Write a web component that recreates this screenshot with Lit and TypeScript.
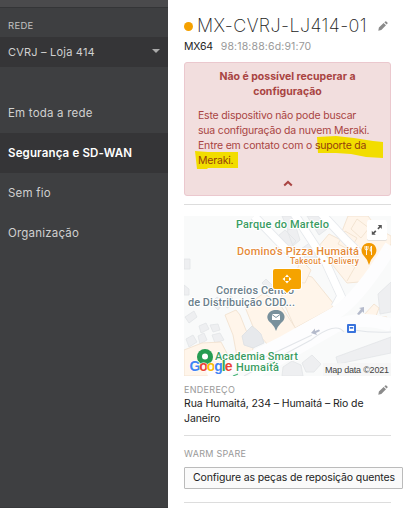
import { LitElement, html, css } from "lit";
import { customElement } from "lit/decorators.js";

const pencil = html`<svg class="pencil" width="10" height="10" viewBox="0 0 10 10"><path d="M0.3 9.7 0.9 6.6 5.6 1.9 8 4.3 3.3 9Z M6.3 1.3 7.3.4Q7.8 0 8.3.5L9.4 1.6Q9.9 2.1 9.4 2.7L8.6 3.6Z" fill="#8b8b8b"/></svg>`;

@customElement("side-nav")
class SideNav extends LitElement {
  static styles = css`
    :host { display: flex; flex-direction: column; width: 168px; flex: none; box-sizing: border-box;
      background: #3e3f41; color: #d0d0d0; font-size: 12px; border-bottom: 1px solid #38393b; }
    .top { height: 7px; background: #4a4a4c; border-bottom: 1px solid #343537; }
    .label { height: 29px; box-sizing: border-box; padding: 10px 8px 0; font-size: 9.5px; line-height: 16px; letter-spacing: .3px; color: #c2c2c2; }
    .network { height: 30px; background: #353537; padding: 0 8px; display: flex; align-items: center; justify-content: space-between; font-size: 11px; letter-spacing: .2px; }
    .network svg { margin: -3px 0 0; }
    nav { margin-top: 26px; display: flex; flex-direction: column; letter-spacing: .2px; }
    .item { height: 40px; line-height: 41px; padding-left: 8px; font-size: 11.5px; }
    .active { background: #353537; color: #fff; font-weight: 600; letter-spacing: .15px; }
  `;
  render() {
    return html`<div class="top"></div><div class="label">REDE</div>
      <div class="network"><span>CVRJ – Loja 414</span><svg width="8" height="4"><path d="M0 0H8L4 4Z" fill="#aaa"/></svg></div>
      <nav>${["Em toda a rede", "Segurança e SD-WAN", "Sem fio", "Organização"].map((t, i) => html`<div class="item ${i === 1 ? "active" : ""}">${t}</div>`)}</nav>`;
  }
}

@customElement("location-map")
class LocationMap extends LitElement {
  static styles = css`
    :host { display: block; height: 160px; }
    svg { display: block; }
    text { font-family: Roboto, sans-serif; font-size: 11px; font-weight: 500; paint-order: stroke; stroke: #fff; stroke-width: 2px; stroke-linejoin: round; }
    .green { fill: #3a9c62; }
    .orange { fill: #e58a38; }
    .slate { fill: #6b7f8c; }
    .small { font-size: 8.5px; }
    .logo { font-size: 14px; font-family: "Liberation Sans", sans-serif; font-weight: 700; stroke-width: 1px; }
    .credit { fill: #444; font: 9px "Liberation Sans", sans-serif; stroke: none; }
  `;
  render() {
    return html`<svg width="207" height="160" viewBox="0 0 207 160">
      <rect width="207" height="160" fill="#f9fafa"/>
      <g fill="#eeeff1" stroke="#e2e4e7" stroke-width=".8">
        <path d="M94 20 101 14 112 25 104 34ZM103 14 112 11 116 24 109 30ZM117 33 127 26 134 44 124 49ZM0 43H6V53H0ZM0 69 5 73V79H0ZM78 67 82 63 89 70 84 74Z"/>
        <path d="M98 0H112L117 10 104 14ZM123 0H135L143 13 135 19ZM194 78 207 66V96L196 98ZM152 141 207 121V137L154 148ZM118 147 128 139 137 148 130 156H122ZM99 151 108 145 117 149 119 160H98Z"/>
        <path d="M1 101 10 95 13 101 5 107ZM15 110 22 107 25 113 17 117ZM27 87 33 81 40 86 34 94ZM39 85 47 80 51 87 43 92ZM26 109 34 108 36 114 29 116ZM2 123 9 119 13 126 5 131ZM14 120 20 117 23 124 16 128ZM28 119 36 117 40 124 31 127Z"/>
      </g>
      <g fill="#fff5ea" stroke="#f2e2d0" stroke-width=".9">
        <path d="M97 81 112 57 128 61 149 87 148 92 111 112Z"/>
        <path d="M61 91 80 77 97 90 112 113 84 129 70 113Z"/>
        <path d="M117 44 127 54 121 67 108 66Z"/>
        <path d="M134 31 145 18 155 23 164 0H184L193 12 207 20V28L189 55 175 66 163 67 147 47Z"/>
        <path d="M41 99 52 94 56 99 69 132 67 145 54 146 49 119Z"/>
        <path d="M0 134 18 127 37 126 45 141 54 150 24 160H0Z"/>
        <path d="M179 100 190 88 195 92 192 100 203 101 199 108 188 107Z"/>
      </g>
      <path d="M58 120 68 110 73 114 77 118 80 127 69 132 60 129Z" fill="#e7e9ec" stroke="#dcdfe3" stroke-width=".8"/>
      <path d="M161 15 173 22 166 34 154 28ZM173 3 185 12 177 22 167 13ZM157 42 171 51 163 65" fill="none" stroke="#f0dfcc" stroke-width=".8"/>
      <g fill="none" stroke="#e5e8ec" stroke-width="9">
        <path d="M109-4 141 45 157 80 151 91M135-5 162 24 176 38M70 0 100 31 118 47"/>
      </g>
      <g fill="none" stroke="#fff" stroke-width="7.500">
        <path d="M109-4 141 45 157 80 151 91M135-5 162 24 176 38M70 0 100 31 118 47"/>
      </g>
      <path d="M24 160Q66 144 100 126L150 98Q174 84 207 30M207 109Q175 99 150 111L65 160" fill="none" stroke="#fdfdfe" stroke-width="13"/>
      <path d="M60 160 127 124Q152 105 160 116M170 114Q187 117 207 116M73 145 128 119" fill="none" stroke="#e2e5e9" stroke-width="1.1"/>
      <path d="M76 154 101 141M49 160 54 158" stroke="#4bb67b" stroke-width="1.2" stroke-dasharray="7 3"/>
      <g fill="#b4bacb"><path d="M127 117 131 112.500V115L135 113.500 136 115 132 117 133 119Z"/><path d="M173 98 177 93 175 92 180 91 180 97 178.500 95.500 175 99Z"/></g>
      <text class="green" x="52" y="12" textLength="93">Parque do Martelo</text>
      <text class="orange" x="53" y="39" textLength="122">Domino's Pizza Humaitá</text>
      <text class="orange small" x="106" y="47.500" textLength="69">Takeout • Delivery</text>
      <text class="slate" x="32" y="78" textLength="78">Correios Centro</text>
      <text class="slate" x="4" y="90" textLength="107">de Distribuição CDD...</text>
      <circle cx="21" cy="141" r="8" fill="#259c52"/><circle cx="21" cy="140.500" r="3" fill="#fff"/>
      <text class="green" x="31" y="143.500" textLength="83">Academia Smart</text>
      <text class="green" x="52" y="154.500" textLength="43">Humaitá</text>
      <path d="M185 49Q184 44 180 40C175 35 178 27 185 27S195 35 190 40Q186 44 185 49Z" fill="#f29900"/>
      <path d="M181 30V32.500Q181 34 182.500 34V39M182.500 30V34Q184 34 184 32.500V30M187.500 39V30Q185.800 32 186.200 35H187.500" stroke="#fff" stroke-width=".9" fill="none"/>
      <path d="M92 115Q91 111 87 107C80 102 84 94 92 94S104 102 97 107Q93 111 92 115Z" fill="#78909c"/>
      <rect x="88" y="98" width="8" height="6" fill="#fff"/><path d="M88 98.500 92 101.500 96 98.500" fill="none" stroke="#78909c"/>
      <path d="M91 53H115Q117 53 117 55V71Q117 73 115 73H107L103 77 99 73H91Q89 73 89 71V55Q89 53 91 53Z" fill="#f5a300" stroke="#fff" stroke-width="2" paint-order="stroke"/>
      <g fill="#fff"><path d="M103 58.500 105 61H101ZM103 67.500 101 65H105ZM98.500 63 101 61V65ZM107.500 63 105 65V61Z"/></g>
      <path d="M103 61 105 63 103 65 101 63Z" fill="#f5a300"/>
      <rect x="163" y="108" width="9" height="9" rx="1" fill="#3973dc"/><path d="M165 110H170V115H165Z" fill="#fff"/><path d="M165.800 111H169.200V112.700H165.800Z" fill="#3973dc"/>
      <rect x="183" y="4.500" width="20" height="20" rx="1.500" fill="#ccc"/><rect x="183" y="4" width="20" height="20" rx="1.500" fill="#fff"/>
      <path d="M193.800 9H197.800V13L196.400 11.600 194.500 13.500 193.300 12.300 195.200 10.400ZM187.800 14.800 189.200 16.200 191.200 14.200 192.400 15.400 190.400 17.400 191.800 18.800H187.800Z" fill="#555"/>
      <text class="logo" x="5.500" y="155" textLength="43"><tspan fill="#4285f4">G</tspan><tspan fill="#ea4335">o</tspan><tspan fill="#fbbc05">o</tspan><tspan fill="#4285f4">g</tspan><tspan fill="#34a853">l</tspan><tspan fill="#ea4335">e</tspan></text>
      <rect x="139" y="147" width="68" height="13" fill="#f5f5f5" opacity=".8"/><text class="credit" x="141" y="157" textLength="64">Map data ©2021</text>
    </svg>`;
  }
}

@customElement("app-root")
class AppRoot extends LitElement {
  static styles = css`
    :host { display: flex; width: 407px; height: 508px; overflow: hidden; background: #fff; color: #222; font: 10.5px/15px Inter, sans-serif; }
    main { width: 207px; padding: 16px 16px 0; flex: none; }
    .title { display: flex; align-items: center; height: 20px; }
    .dot { width: 9px; height: 9px; border-radius: 50%; background: #f5a100; margin-right: 4px; flex: none; }
    h1 { margin: 0; font-size: 18px; font-weight: 250; line-height: 20px; letter-spacing: .38px; white-space: nowrap; }
    .pencil { display: block; margin-left: auto; margin-right: 3px; flex: none; }
    .model { display: flex; gap: 8px; height: 15px; margin-top: 3px; letter-spacing: -.2px; font-feature-settings: "calt" 0; }
    .model span { color: #999; letter-spacing: .15px; }
    .alert { box-sizing: border-box; height: 134px; margin-top: 8px; padding: 6px 13px 0; border: 1px solid #ebc8ce; border-radius: 3px; background: #f2dede; color: #a94442; position: relative; }
    .alert h2 { margin: 0 0 9px; text-align: center; font-size: 10.5px; line-height: 15px; font-weight: 700; }
    .alert p { margin: 0; position: relative; white-space: nowrap; letter-spacing: -.19px; }
    .marker { position: absolute; left: -2px; top: 72px; }
    .link { color: #95400c; }
    .chevron { display: block; margin: 12px auto 0; }
    hr { border: 0; height: 1px; background: #ddd; margin: 8px 0 11px; }
    .caption { color: #999; font-size: 9px; line-height: 13px; letter-spacing: .3px; }
    .row { display: flex; align-items: center; margin-top: 7px; height: 13px; }
    .address { margin-top: 0; white-space: nowrap; letter-spacing: -.1px; }
    hr.second { margin: 9px 0 11px; }
    button { display: block; box-sizing: border-box; width: 219px; height: 22px; margin-top: 7px; padding: 0 0 1px 8px; background: #fafafa; border: 1px solid #bbb; border-radius: 1px; color: #222; font: 10.5px/15px Inter, sans-serif; letter-spacing: -.13px; text-align: left; white-space: nowrap; }
    hr.last { margin: 13px 0 0; }
  `;
  render() {
    return html`<side-nav></side-nav><main>
      <div class="title"><i class="dot"></i><h1>MX-CVRJ-LJ414-01</h1>${pencil}</div>
      <div class="model">MX64 <span>98:18:88:6d:91:70</span></div>
      <section class="alert">
        <svg class="marker" width="207" height="50" viewBox="183 135 207 50"><path d="M317 137 336 136 354 138 373 141 383 142V158L366 157 351 154 336 153 318 153ZM195 151 208 152H238V168H208L207 169H197Z" fill="#f2dd00"/></svg>
        <h2>Não é possível recuperar a<br>configuração</h2>
        <p>Este dispositivo não pode buscar<br>sua configuração da nuvem Meraki.<br>Entre em contato com o <span class="link">suporte da<br>Meraki.</span></p>
        <svg class="chevron" width="10" height="7"><path d="M1.200 5.500 5 1.900 8.800 5.500" fill="none" stroke="#a94442" stroke-width="2"/></svg>
      </section>
      <hr><location-map></location-map>
      <div class="row"><span class="caption">ENDEREÇO</span>${pencil}</div>
      <div class="address">Rua Humaitá, 234 – Humaitá – Rio de<br>Janeiro</div>
      <hr class="second"><div class="caption">WARM SPARE</div>
      <button>Configure as peças de reposição quentes</button><hr class="last">
    </main>`;
  }
}
